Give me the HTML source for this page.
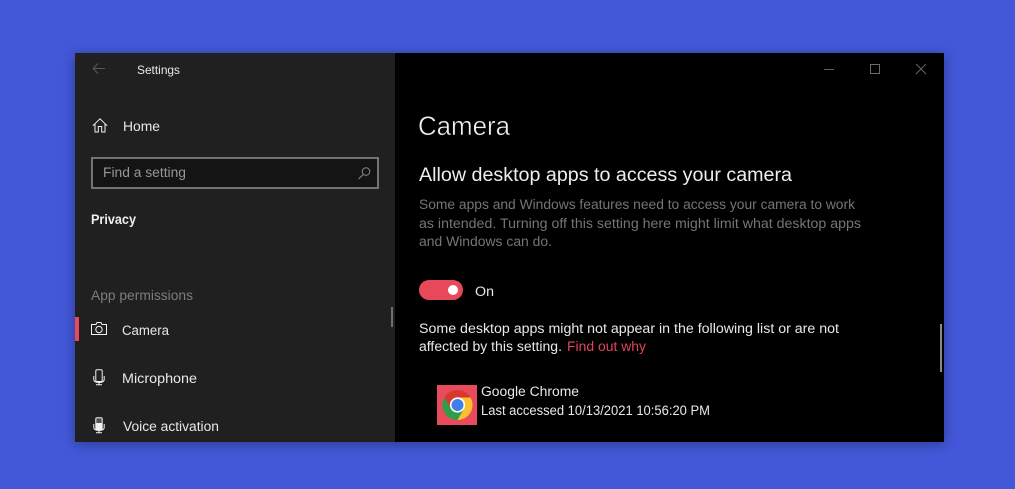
<!DOCTYPE html>
<html>
<head>
<meta charset="utf-8">
<title>Settings - Camera</title>
<style>
html,body{margin:0;padding:0;background:#4358d9;width:1015px;height:489px;overflow:hidden}
svg{display:block}
text{font-family:"Liberation Sans",sans-serif;white-space:pre}
.win{position:absolute;left:75px;top:53px;width:869px;height:389px;box-shadow:0 2px 12px rgba(0,0,0,.35)}
</style>
</head>
<body>
<div class="win"></div>
<svg style="position:absolute;left:0;top:0" width="1015" height="489" viewBox="0 0 1015 489" xmlns="http://www.w3.org/2000/svg">
  <rect x="75" y="53" width="320" height="389" fill="#202020"/>
  <rect x="395" y="53" width="549" height="389" fill="#000"/>

  <path d="M93 68.5H105M93 68.5L98 63.5M93 68.5L98 73.5" fill="none" stroke="#5a5a5a" stroke-width="1"/>
  <text x="137" y="74" font-size="12" fill="#e8e8e8" textLength="43" lengthAdjust="spacingAndGlyphs">Settings</text>

  <path d="M92.8 125.8L100 118.8L107.2 125.8M95 124V132H98.3V126.5H101.7V132H105V124" fill="none" stroke="#f2f2f2" stroke-width="1"/>
  <text x="123" y="131" font-size="13.5" fill="#e8e8e8" textLength="37" lengthAdjust="spacingAndGlyphs">Home</text>

  <rect x="92" y="158" width="286" height="30" fill="#141414" stroke="#737373" stroke-width="2"/>
  <text x="103" y="177" font-size="13.5" fill="#969696" textLength="83" lengthAdjust="spacingAndGlyphs">Find a setting</text>
  <circle cx="366" cy="171.5" r="3.8" fill="none" stroke="#8c8c8c" stroke-width="1"/>
  <path d="M363.3 174.5L358.5 179" fill="none" stroke="#8c8c8c" stroke-width="1"/>

  <text x="91" y="224" font-size="13.5" font-weight="700" fill="#eeeeee" textLength="45" lengthAdjust="spacingAndGlyphs">Privacy</text>
  <text x="91" y="300" font-size="13.5" fill="#7c7c7c" textLength="102" lengthAdjust="spacingAndGlyphs">App permissions</text>

  <rect x="75" y="317" width="4" height="24" fill="#e8495a"/>
  <path d="M91.5 324.5H96L97 322.5H101L102 324.5H106.5V334.5H91.5Z" fill="none" stroke="#f2f2f2" stroke-width="1"/>
  <circle cx="99" cy="329.5" r="3.2" fill="none" stroke="#f2f2f2" stroke-width="1"/>
  <text x="122" y="335" font-size="13.5" fill="#e8e8e8" textLength="47" lengthAdjust="spacingAndGlyphs">Camera</text>

  <rect x="95.8" y="369.8" width="6.4" height="11.7" rx="1.2" fill="none" stroke="#f2f2f2" stroke-width="1"/>
  <path d="M93.8 376V379.5Q93.8 382.5 99 382.5Q104.2 382.5 104.2 379.5V376M99 382.5V384.5M96 384.8H102" fill="none" stroke="#f2f2f2" stroke-width="1"/>
  <text x="122" y="383" font-size="13.5" fill="#e8e8e8" textLength="75" lengthAdjust="spacingAndGlyphs">Microphone</text>

  <rect x="95.8" y="417.8" width="6.4" height="11.7" rx="1.2" fill="#555" stroke="#f2f2f2" stroke-width="1"/>
  <rect x="95.5" y="423" width="7" height="6.8" fill="#f2f2f2"/>
  <path d="M93.8 424V427.5Q93.8 430.5 99 430.5Q104.2 430.5 104.2 427.5V424M99 430.5V432.5M96 432.8H102" fill="none" stroke="#f2f2f2" stroke-width="1"/>
  <text x="123" y="431" font-size="13.5" fill="#e8e8e8" textLength="96" lengthAdjust="spacingAndGlyphs">Voice activation</text>

  <rect x="391" y="307" width="2" height="20" fill="#6e6e6e"/>

  <rect x="824" y="69" width="10" height="1" fill="#5e5e5e"/>
  <rect x="870.5" y="64.5" width="9" height="9" fill="none" stroke="#6a6a6a" stroke-width="1"/>
  <path d="M916 64L926 74M926 64L916 74" fill="none" stroke="#666" stroke-width="1"/>

  <text x="418" y="135" font-size="26.5" fill="#f0f0f0" stroke="#000" stroke-width="0.45" textLength="92" lengthAdjust="spacingAndGlyphs">Camera</text>
  <text x="419" y="181" font-size="19" fill="#eeeeee" textLength="373" lengthAdjust="spacingAndGlyphs">Allow desktop apps to access your camera</text>

  <text x="419" y="209" font-size="13.5" fill="#757575" textLength="436" lengthAdjust="spacingAndGlyphs">Some apps and Windows features need to access your camera to work</text>
  <text x="419" y="228" font-size="13.5" fill="#757575" textLength="442" lengthAdjust="spacingAndGlyphs">as intended. Turning off this setting here might limit what desktop apps</text>
  <text x="419" y="246" font-size="13.5" fill="#757575" textLength="133" lengthAdjust="spacingAndGlyphs">and Windows can do.</text>

  <rect x="419" y="280" width="44" height="20" rx="10" fill="#e8495a"/>
  <circle cx="453" cy="290" r="5" fill="#fff"/>
  <text x="475" y="296" font-size="13.5" fill="#e8e8e8" textLength="19" lengthAdjust="spacingAndGlyphs">On</text>

  <text x="419" y="333" font-size="13.5" fill="#e8e8e8" textLength="420" lengthAdjust="spacingAndGlyphs">Some desktop apps might not appear in the following list or are not</text>
  <text x="419" y="351" font-size="13.5" fill="#e8e8e8" textLength="143" lengthAdjust="spacingAndGlyphs">affected by this setting.</text>
  <text x="567" y="351" font-size="13.5" fill="#e0445a" textLength="79" lengthAdjust="spacingAndGlyphs">Find out why</text>

  <rect x="437" y="385" width="40" height="40" fill="#e84b5c"/>
  <path d="M444.5 397.5A15 15 0 0 1 470.5 397.5H457.5L451 408.75Z" fill="#d8382f"/>
  <path d="M444.5 397.5A15 15 0 0 0 457.5 420L464 408.75H451Z" fill="#2f9e4a"/>
  <path d="M470.5 397.5A15 15 0 0 1 457.5 420L464 408.75L457.5 397.5Z" fill="#fbc02d"/>
  <circle cx="457.5" cy="405" r="7.6" fill="#fff"/>
  <circle cx="457.5" cy="405" r="6" fill="#3f7fe8"/>

  <text x="481" y="396" font-size="13.5" fill="#e8e8e8" textLength="98" lengthAdjust="spacingAndGlyphs">Google Chrome</text>
  <text x="481" y="415" font-size="13.5" fill="#e8e8e8" textLength="229" lengthAdjust="spacingAndGlyphs">Last accessed 10/13/2021 10:56:20 PM</text>

  <rect x="940" y="324" width="2" height="48" fill="#8a8a8a"/>
</svg>
</body>
</html>
